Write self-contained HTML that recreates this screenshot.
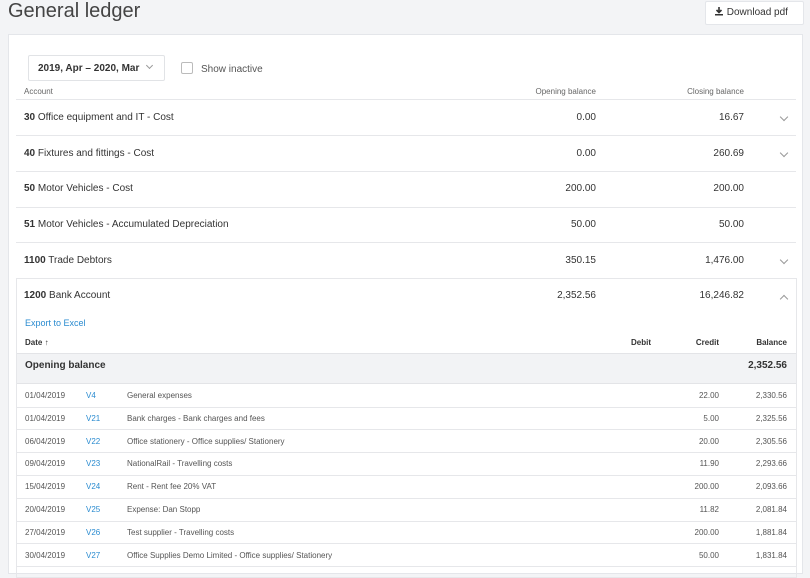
<!DOCTYPE html>
<html><head><style>
*{margin:0;padding:0;box-sizing:border-box}
body{width:810px;height:566px;overflow:hidden;background:#f3f4f6;font-family:"Liberation Sans",sans-serif;color:#333;position:relative}
.a{position:absolute;white-space:nowrap}
.r{text-align:right}
.card{position:absolute;left:8px;top:34px;width:795px;height:540px;background:#fff;border:1px solid #e4e6ea}
.hl{position:absolute;left:16px;width:780px;height:1px;background:#e6e7ea}
.acc{font-size:10px;color:#333}
.acc b{font-weight:bold}
.chev{position:absolute;width:6px;height:6px;border-right:1px solid #999;border-bottom:1px solid #999;transform:rotate(45deg)}
.sm{font-size:8px;color:#555}
.v{color:#2a8bd0}
</style></head><body>
<div class="a" style="left:8px;top:0px;font-size:20px;color:#444">General ledger</div>
<div class="a" style="left:705px;top:1px;width:99px;height:24px;background:#fff;border:1px solid #e4e6ea;border-radius:2px;font-size:10px;line-height:22px;padding-left:8px;color:#333">
<svg width="10" height="10" viewBox="0 0 10 10" style="vertical-align:-1px"><path d="M5 1v5M2.5 4l2.5 2.5L7.5 4" stroke="#333" stroke-width="1.6" fill="none"/><rect x="1" y="8" width="8" height="1.5" fill="#333"/></svg> Download pdf</div>
<div class="card"></div>
<div class="a" style="left:28px;top:55px;width:137px;height:26px;border:1px solid #e1e3e6;border-radius:2px;font-size:10px;font-weight:bold;line-height:25px;padding-left:9px;color:#333">2019, Apr – 2020, Mar</div>
<div class="chev" style="left:147px;top:63px;width:5px;height:5px"></div>
<div class="a" style="left:181px;top:62px;width:12px;height:12px;border:1px solid #bbb;border-radius:2px"></div>
<div class="a" style="left:201px;top:64px;font-size:10px;color:#555">Show inactive</div>
<div class="a sm" style="left:24px;top:87px;color:#666">Account</div>
<div class="a sm r" style="left:496px;top:87px;width:100px;color:#666">Opening balance</div>
<div class="a sm r" style="left:644px;top:87px;width:100px;color:#666">Closing balance</div>
<div class="hl" style="top:99px"></div>
<div class="a acc" style="left:24px;top:112px"><b>30</b> Office equipment and IT - Cost</div>
<div class="a acc r" style="left:496px;top:112px;width:100px">0.00</div>
<div class="a acc r" style="left:644px;top:112px;width:100px">16.67</div>
<div class="chev" style="left:781px;top:114px"></div>
<div class="hl" style="top:135px"></div>
<div class="a acc" style="left:24px;top:148px"><b>40</b> Fixtures and fittings - Cost</div>
<div class="a acc r" style="left:496px;top:148px;width:100px">0.00</div>
<div class="a acc r" style="left:644px;top:148px;width:100px">260.69</div>
<div class="chev" style="left:781px;top:150px"></div>
<div class="hl" style="top:171px"></div>
<div class="a acc" style="left:24px;top:183px"><b>50</b> Motor Vehicles - Cost</div>
<div class="a acc r" style="left:496px;top:183px;width:100px">200.00</div>
<div class="a acc r" style="left:644px;top:183px;width:100px">200.00</div>
<div class="hl" style="top:207px"></div>
<div class="a acc" style="left:24px;top:219px"><b>51</b> Motor Vehicles - Accumulated Depreciation</div>
<div class="a acc r" style="left:496px;top:219px;width:100px">50.00</div>
<div class="a acc r" style="left:644px;top:219px;width:100px">50.00</div>
<div class="hl" style="top:242px"></div>
<div class="a acc" style="left:24px;top:255px"><b>1100</b> Trade Debtors</div>
<div class="a acc r" style="left:496px;top:255px;width:100px">350.15</div>
<div class="a acc r" style="left:644px;top:255px;width:100px">1,476.00</div>
<div class="chev" style="left:781px;top:257px"></div>
<div class="a" style="left:16px;top:278px;width:781px;height:300px;border:1px solid #e6e7ea"></div>
<div class="a acc" style="left:24px;top:290px"><b>1200</b> Bank Account</div>
<div class="a acc r" style="left:496px;top:290px;width:100px">2,352.56</div>
<div class="a acc r" style="left:644px;top:290px;width:100px">16,246.82</div>
<div class="chev" style="left:781px;top:296px;transform:rotate(-135deg)"></div>
<div class="a v" style="left:25px;top:318px;font-size:9px">Export to Excel</div>
<div class="a sm" style="left:25px;top:338px;font-weight:bold;color:#333">Date ↑</div>
<div class="a sm r" style="left:591px;top:338px;width:60px;font-weight:bold;color:#333">Debit</div>
<div class="a sm r" style="left:659px;top:338px;width:60px;font-weight:bold;color:#333">Credit</div>
<div class="a sm r" style="left:727px;top:338px;width:60px;font-weight:bold;color:#333">Balance</div>
<div class="a" style="left:17px;top:353px;width:779px;height:31px;background:#f2f3f5;border-top:1px solid #e3e4e7;border-bottom:1px solid #e3e4e7"></div>
<div class="a" style="left:25px;top:360px;font-size:10px;font-weight:bold;color:#333">Opening balance</div>
<div class="a r" style="left:707px;top:360px;width:80px;font-size:10px;font-weight:bold;color:#333">2,352.56</div>
<div id="tx"></div>
<script>
var d=[["01/04/2019","V4","General expenses","22.00","2,330.56"],["01/04/2019","V21","Bank charges - Bank charges and fees","5.00","2,325.56"],["06/04/2019","V22","Office stationery - Office supplies/ Stationery","20.00","2,305.56"],["09/04/2019","V23","NationalRail - Travelling costs","11.90","2,293.66"],["15/04/2019","V24","Rent - Rent fee 20% VAT","200.00","2,093.66"],["20/04/2019","V25","Expense: Dan Stopp","11.82","2,081.84"],["27/04/2019","V26","Test supplier - Travelling costs","200.00","1,881.84"],["30/04/2019","V27","Office Supplies Demo Limited - Office supplies/ Stationery","50.00","1,831.84"]];
var h="";
d.forEach(function(r,i){var y=391+i*22.8;
h+='<div class="a sm" style="left:25px;top:'+y+'px">'+r[0]+'</div><div class="a sm v" style="left:86px;top:'+y+'px">'+r[1]+'</div><div class="a sm" style="left:127px;top:'+y+'px">'+r[2]+'</div><div class="a sm r" style="left:659px;top:'+y+'px;width:60px">'+r[3]+'</div><div class="a sm r" style="left:727px;top:'+y+'px;width:60px">'+r[4]+'</div><div class="hl" style="top:'+(y+15.5)+'px"></div>';});
document.getElementById("tx").innerHTML=h;
</script>
</body></html>
